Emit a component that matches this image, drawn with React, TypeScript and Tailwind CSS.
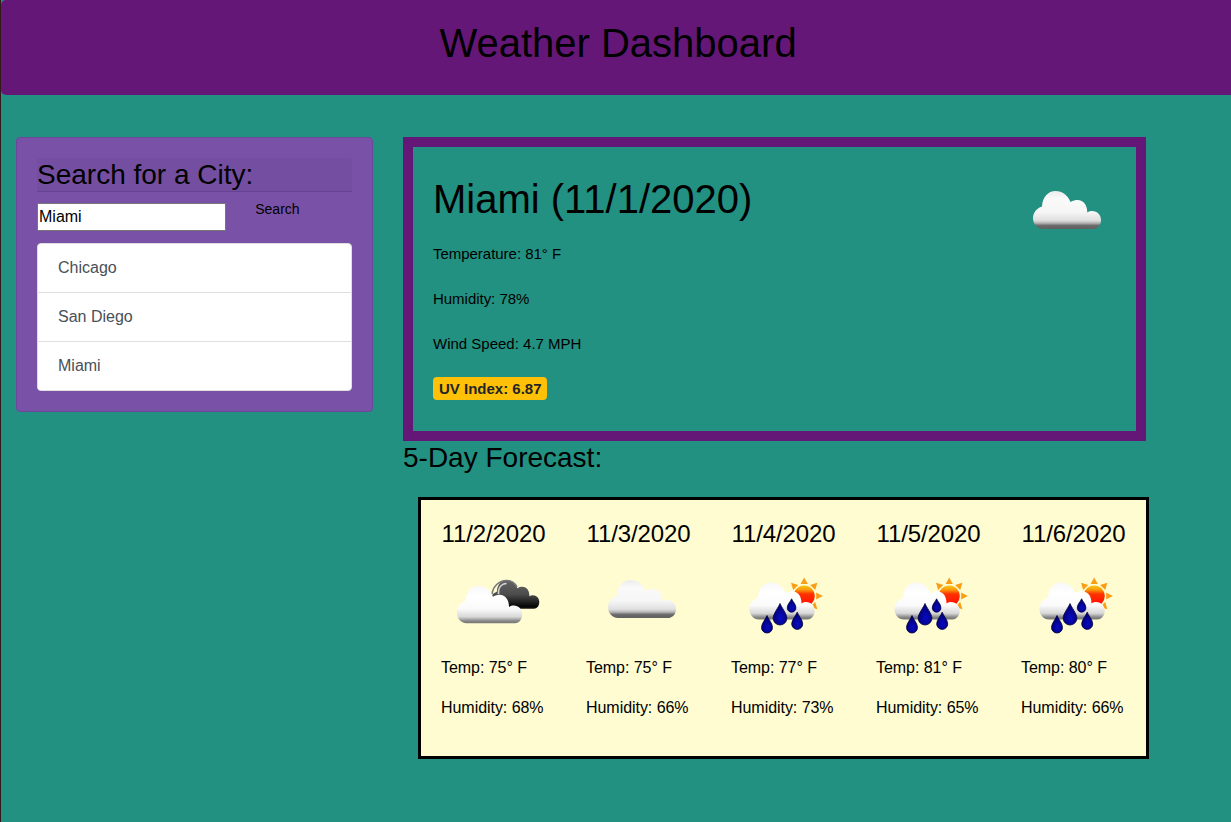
import { useState } from "react";

type Sky = "cloud" | "broken" | "rain";

const CLOUD =
  "M32 64 C26 63.5 22 59 22 53 C22 48 25 43.5 31 41.5 C31.5 32 37 26 44.5 26 C51.5 26 57 30.5 59.5 37 C62 35.5 64.5 35 66.5 35 C72.5 35 76.3 40 76.3 47.5 C78 46.3 79.5 46 81 46 C86.5 46 90 50 90 55 C90 60 87 63.5 82.5 64 Z";

function Drop({ x, top, bottom, w }: { x: number; top: number; bottom: number; w: number }) {
  const c = bottom - w;
  return (
    <path
      d={`M${x} ${top} C${x + 1} ${top + 3} ${x + w} ${c - 4} ${x + w} ${c} A${w} ${w} 0 0 1 ${x - w} ${c} C${x - w} ${c - 4} ${x - 1} ${top + 3} ${x} ${top} Z`}
      fill="url(#drop)"
      stroke="#00003c"
      strokeWidth="0.8"
    />
  );
}

function WeatherIcon({ sky }: { sky: Sky }) {
  return (
    <svg className="block size-[100px] shrink-0" viewBox="0 0 100 100" aria-hidden="true">
      <defs>
        <linearGradient id="cloud" x1="0" y1="0" x2="0" y2="1">
          <stop offset="0" stopColor="#ececec" />
          <stop offset="0.2" stopColor="#fafafa" />
          <stop offset="0.55" stopColor="#f6f6f6" />
          <stop offset="0.77" stopColor="#e0e0e0" />
          <stop offset="0.84" stopColor="#b8b8b8" />
          <stop offset="0.91" stopColor="#6a6a6a" />
          <stop offset="1" stopColor="#606060" />
        </linearGradient>
        <linearGradient id="front" x1="0" y1="0" x2="0" y2="1">
          <stop offset="0" stopColor="#f8f8f8" />
          <stop offset="0.3" stopColor="#ffffff" />
          <stop offset="0.62" stopColor="#fafafa" />
          <stop offset="0.83" stopColor="#d8d8d8" />
          <stop offset="0.94" stopColor="#868686" />
          <stop offset="1" stopColor="#767676" />
        </linearGradient>
        <linearGradient id="dark" x1="0" y1="0" x2="0" y2="1">
          <stop offset="0" stopColor="#646464" />
          <stop offset="0.5" stopColor="#4c4c4c" />
          <stop offset="0.92" stopColor="#050505" />
          <stop offset="1" stopColor="#1a1a1a" />
        </linearGradient>
        <linearGradient id="sun" x1="0" y1="0" x2="0" y2="1">
          <stop offset="0" stopColor="#f3c81c" />
          <stop offset="0.2" stopColor="#fb9a08" />
          <stop offset="0.4" stopColor="#ff3200" />
          <stop offset="1" stopColor="#ff0800" />
        </linearGradient>
        <radialGradient id="drop" cx="0.55" cy="0.68" r="0.6">
          <stop offset="0" stopColor="#0a0ac4" />
          <stop offset="1" stopColor="#000070" />
        </radialGradient>
        <filter id="soft" x="-8%" y="-8%" width="116%" height="116%" colorInterpolationFilters="sRGB">
          <feGaussianBlur stdDeviation="0.65" />
        </filter>
      </defs>
      <g filter="url(#soft)">
        {sky === "cloud" && (
          <path d={CLOUD} fill="url(#cloud)" />
        )}
        {sky === "broken" && (
          <>
            <path d={CLOUD} transform="translate(33.5 6.2) scale(0.72 0.76)" fill="url(#dark)" />
            <path d="M51 40 C52 32 58.5 26.5 65.5 26.5 C70.5 26.5 74 29 76 33" fill="none" stroke="#777777" strokeWidth="1.6" />
            <path d="M57.5 40 C57 34 60 30 65.5 29.5" fill="none" stroke="#d4d4d4" strokeWidth="1.7" />
            <path d={CLOUD} transform="translate(-5.2 6.2) scale(0.96 0.985)" fill="url(#front)" />
          </>
        )}
        {sky === "rain" && (
          <>
            {[-135, -90, -45, 0, 45].map((a) => (
              <path key={a} d="M12 -3.6 L18.6 0 L12 3.6 Z" fill="#fb9d14" transform={`translate(73.2 42) rotate(${a})`} />
            ))}
            <circle cx="73.2" cy="42.1" r="10.6" fill="url(#sun)" />
            <path d={CLOUD} transform="translate(-2.7 3.2) scale(0.96 0.975)" fill="url(#front)" />
            <Drop x={60.6} top={44.8} bottom={58.2} w={4.3} />
            <Drop x={49} top={49.5} bottom={71} w={6.9} />
            <Drop x={36} top={61.5} bottom={79} w={5.5} />
            <Drop x={66.2} top={58.2} bottom={75.4} w={5.5} />
          </>
        )}
      </g>
    </svg>
  );
}

const cities = ["Chicago", "San Diego", "Miami"];

const days: { date: string; sky: Sky; temp: number; humidity: number }[] = [
  { date: "11/2/2020", sky: "broken", temp: 75, humidity: 68 },
  { date: "11/3/2020", sky: "cloud", temp: 75, humidity: 66 },
  { date: "11/4/2020", sky: "rain", temp: 77, humidity: 73 },
  { date: "11/5/2020", sky: "rain", temp: 81, humidity: 65 },
  { date: "11/6/2020", sky: "rain", temp: 80, humidity: 66 },
];

export default function App() {
  const [query, setQuery] = useState("Miami");

  return (
    <div className="h-[822px] w-full overflow-hidden border-l border-[#321a1c] bg-[#229182] font-['Liberation_Sans',Arial,sans-serif] text-base text-black">
      <header className="h-[95px] rounded-l-[5px] bg-[#651778] pt-[19px] pl-1 text-center">
        <h1 className="text-[40px] leading-[48px]">Weather Dashboard</h1>
      </header>

      <div className="flex items-start gap-[30px] pt-[42px] pl-[15px]">
        <aside className="h-[275px] w-[357px] shrink-0 rounded border border-[#6b4897] bg-[#7952a7] p-5">
          <h3 className="h-[34px] rounded-t-[3px] border-b border-[#664293] bg-[#744fa1] text-[28px] leading-[33.6px]">
            Search for a City:
          </h3>
          <div className="flex h-[51px] items-start pt-[11px]">
            <input
              className="h-7 w-[189px] border border-[#767676] bg-white px-px text-base outline-none"
              value={query}
              onChange={(e) => setQuery(e.target.value)}
            />
            <button className="ml-[29.25px] -mt-1 text-sm leading-[21px]">Search</button>
          </div>
          <ul className="divide-y divide-[#dfdfdf] rounded border border-[#dfdfdf] bg-white text-[#495057]">
            {cities.map((city) => (
              <li key={city} className="box-content h-6 px-5 py-3 leading-6">
                {city}
              </li>
            ))}
          </ul>
        </aside>

        <main className="w-[746px]">
          <section className="flex h-[304px] w-[743px] justify-between border-10 border-[#651778] pt-[18px] pl-5 pr-[25.5px]">
            <div className="pt-[10px]">
              <h1 className="text-[40px] leading-[48px]">Miami (11/1/2020)</h1>
              <div className="mt-[19px] flex flex-col items-start text-[15px] leading-[23px]">
                <p className="h-[45px] tracking-[-0.03px]">Temperature: 81° F</p>
                <p className="h-[45px] tracking-[-0.03px]">Humidity: 78%</p>
                <p className="h-[45px]">Wind Speed: 4.7 MPH</p>
                <span className="h-[23px] w-[114px] whitespace-nowrap rounded bg-[#ffc107] pl-1.5 font-bold text-[#212529]">
                  UV Index: 6.87
                </span>
              </div>
            </div>
            <WeatherIcon sky="cloud" />
          </section>

          <h3 className="text-[28px] leading-[33.6px]">5-Day Forecast:</h3>

          <section className="ml-[15px] mt-[22.4px] grid h-[262px] w-[731px] grid-cols-[repeat(5,145px)] border-3 border-black bg-[#fffcd1] pt-[19px] pl-5">
            {days.map((day) => (
              <article key={day.date}>
                <h4 className="pl-[0.5px] text-2xl leading-[29px] tracking-[-0.1px]">{day.date}</h4>
                <div className="mt-[6px]">
                  <WeatherIcon sky={day.sky} />
                </div>
                <p className="mt-0.5 leading-6 tracking-[-0.05px]">Temp: {day.temp}° F</p>
                <p className="mt-4 leading-6 tracking-[-0.05px]">Humidity: {day.humidity}%</p>
              </article>
            ))}
          </section>
        </main>
      </div>
    </div>
  );
}
